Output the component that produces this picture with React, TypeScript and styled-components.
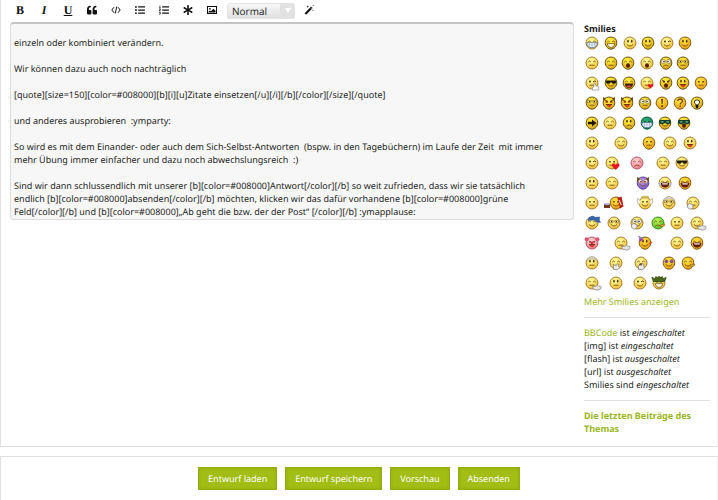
import React from "react";
import styled, { createGlobalStyle, css } from "styled-components";
import { FaQuoteLeft, FaListUl, FaListOl, FaAsterisk } from "react-icons/fa";

const GREEN = "#a2bd13";
const LINK = "#9bb71a";
const INK = "#1c1e22";
const LINE = "#e0e0e0";

const GlobalStyle = createGlobalStyle`
  * { box-sizing: border-box; }
  body {
    margin: 0;
    background: #fff;
    color: ${INK};
    font: 9px/13px "Noto Sans", "Open Sans", sans-serif;
    text-rendering: geometricPrecision;
  }
  button, select, textarea { font: inherit; color: inherit; margin: 0; text-rendering: inherit; }
`;

const Page = styled.main`
  display: flex;
  flex-direction: column;
  gap: 9px;
  min-height: 100vh;
`;

const Card = styled.section`
  border: 1px solid ${LINE};
  border-right-color: #f0f0f0;
  background: #fff;
`;

const EditorCard = styled(Card)`
  display: flex;
  gap: 10px;
  padding: 0 7px 11px 9px;
  border-top: 0;
`;

const Editor = styled.div`
  flex: 1;
  min-width: 0;
`;

const Toolbar = styled.div`
  display: flex;
  align-items: center;
  height: 22px;
  padding-bottom: 3px;
`;

const ToolButton = styled.button`
  display: flex;
  align-items: center;
  justify-content: center;
  width: 24px;
  height: 18px;
  padding: 0 4px 0 0;
  border: 0;
  background: none;
  color: #111;
  font-size: 10px;
`;

const Letter = styled.span<{ $italic?: boolean; $underline?: boolean }>`
  font: bold 12px/14px "Liberation Serif", serif;
  font-style: ${(p) => (p.$italic ? "italic" : "normal")};
  text-decoration: ${(p) => (p.$underline ? "underline" : "none")};
`;

const SizePicker = styled.label`
  display: grid;
  grid-template-columns: 1fr 15px;
  width: 68px;
  height: 16px;
  margin: 2px 4px 0 1px;
  border-radius: 3px;
  background: linear-gradient(#f8f8f8, #dedede);
  overflow: hidden;
`;

const SizeSelect = styled.select`
  grid-area: 1 / 1 / 2 / 3;
  padding: 0 4px;
  border: 1px solid #e4e4e4;
  border-radius: 3px;
  background: none;
  appearance: none;
  font-family: "Open Sans", sans-serif;
  font-size: 10px;
  line-height: 14px;
`;

const SizeArrow = styled.span`
  grid-area: 1 / 2 / 2 / 3;
  display: flex;
  align-items: center;
  justify-content: center;
  background: #e2e2e2;
  pointer-events: none;
`;

const Message = styled.textarea`
  display: block;
  width: 100%;
  height: 198px;
  padding: 12px 24px 0 3px;
  border: 1px solid #dcdcdc;
  border-top: 2px solid #c4c4c4;
  border-radius: 4px;
  background: #f7f7f7;
  resize: none;
  overflow: hidden;
`;

const Sidebar = styled.aside`
  width: 126px;
  padding-top: 22px;
`;

const SideTitle = styled.h2`
  margin: 0;
  font-size: 9px;
  font-weight: 700;
  line-height: 13px;
`;

const SmileyRow = styled.div`
  display: flex;
  height: 20px;
  margin-right: -7px;
`;

const SmileyButton = styled.button<{ $width: number }>`
  flex: 0 0 ${(p) => p.$width}px;
  display: flex;
  align-items: center;
  height: 16px;
  padding: 0;
  border: 0;
  background: none;
`;

const linkStyle = css`
  color: ${LINK};
  text-decoration: none;
`;

const TextLink = styled.a`
  ${linkStyle}
`;

const Rule = styled.hr`
  height: 1px;
  margin: 9px 0 8px;
  border: 0;
  background: ${LINE};
`;

const StatusList = styled.ul`
  margin: 0;
  padding: 0;
  list-style: none;
`;

const TopicLink = styled.a`
  ${linkStyle}
  display: block;
  padding-right: 12px;
  font-weight: 700;
`;

const ActionCard = styled(Card)`
  flex: 1;
  display: flex;
  justify-content: center;
  align-items: flex-start;
  gap: 8px;
  padding: 10px 0;
  border-bottom: 0;
`;

const ActionButton = styled.button`
  height: 23px;
  padding: 0 9px;
  border: 1px solid #93ae0d;
  background: ${GREEN};
  box-shadow: inset 0 0 3px #8aa40c;
  color: #fff;
`;

type Eyes = "dots" | "tall" | "closed" | "shades" | "wide" | "wink" | "angry" | "mask" | "glasses" | "purple" | "none";
type Mouth = "smile" | "flat" | "frown" | "grin" | "teeth" | "open" | "laugh" | "tongue" | "cry" | "none";
type Extra =
  | "hand" | "kiss" | "horns" | "bang" | "question" | "shock" | "arrow" | "heart" | "tears"
  | "mug" | "wings" | "cap" | "wave" | "hat" | "clown" | "palm" | "cowboy" | "side" | "hair" | "fist";
type Tone = "pale" | "gold" | "green" | "pink" | "violet" | "lime" | "amber";

interface Smiley {
  name: string;
  width: number;
  tone: Tone;
  eyes: Eyes;
  mouth: Mouth;
  extra?: Extra;
}

const tones: Record<Tone, [string, string, string]> = {
  pale: ["#fff48c", "#eebb2c", "#9c7226"],
  gold: ["#ffe83a", "#cf9a0c", "#5e4710"],
  amber: ["#ffdb3a", "#e2920c", "#75500f"],
  green: ["#25a875", "#087047", "#075638"],
  pink: ["#ffc3cc", "#ea7488", "#a8505e"],
  violet: ["#b191ed", "#7952c4", "#533591"],
  lime: ["#a8ea4c", "#54b91e", "#2d8418"],
};

const s = (
  name: string, width: number, tone: Tone, eyes: Eyes, mouth: Mouth, extra?: Extra,
): Smiley => ({ name, width, tone, eyes, mouth, extra });

const smilies: Smiley[][] = [
  [
    s("Zähne", 19, "pale", "closed", "teeth"), s("Grinsen", 19, "gold", "closed", "grin"),
    s("Lächeln", 18, "pale", "tall", "smile"), s("Froh", 19, "gold", "tall", "smile"),
    s("Zwinkern", 18, "pale", "wink", "smile"), s("Schief", 16, "amber", "tall", "smile"),
  ],
  [
    s("Traurig", 19, "pale", "closed", "flat"), s("Brille", 17, "gold", "closed", "flat"),
    s("Erstaunt", 19, "gold", "closed", "open"), s("Ruf", 19, "pale", "closed", "open"),
    s("Augen", 17, "gold", "wide", "frown"), s("Verwirrt", 16, "gold", "glasses", "flat"),
  ],
  [
    s("Denken", 19, "pale", "wink", "flat", "hand"), s("Cool", 18, "gold", "shades", "smile"),
    s("Lachen", 18, "gold", "closed", "laugh"), s("Kuss", 19, "pale", "closed", "flat", "kiss"),
    s("Böse", 17, "gold", "angry", "open"), s("Zunge", 18, "gold", "tall", "tongue"),
    s("Skeptisch", 16, "amber", "dots", "flat"),
  ],
  [
    s("Rot", 17, "gold", "glasses", "flat"), s("Teufel", 18, "gold", "angry", "tongue", "horns"),
    s("Teufelchen", 18, "gold", "angry", "tongue", "horns"), s("Augenrollen", 17, "gold", "wide", "flat"),
    s("Ausruf", 18, "amber", "none", "none", "bang"), s("Frage", 17, "amber", "none", "none", "question"),
    s("Idee", 16, "gold", "none", "none", "shock"),
  ],
  [
    s("Pfeil", 18, "gold", "none", "none", "arrow"), s("Neutral", 19, "pale", "closed", "flat"),
    s("Ernst", 18, "gold", "tall", "frown"), s("Grün", 18, "green", "dots", "teeth"),
    s("Maske", 19, "gold", "mask", "smile"), s("Streber", 16, "gold", "mask", "open"),
  ],
  [
    s("Nachdenklich", 29, "pale", "tall", "smile"), s("Zufrieden", 28, "pale", "closed", "smile"),
    s("Verlegen", 21, "amber", "dots", "flat"), s("Selig", 20, "pale", "closed", "smile"),
    s("Frech", 16, "pale", "tall", "tongue"),
  ],
  [
    s("Keck", 20, "pale", "wink", "smile"), s("Verliebt", 25, "pale", "dots", "flat", "heart"),
    s("Rosa", 26, "pink", "closed", "frown"), s("Grübeln", 19, "pale", "closed", "flat"),
    s("Sonnenbrille", 16, "pale", "shades", "smile"),
  ],
  [
    s("Zweifeln", 20, "pale", "tall", "flat"), s("Müde", 31, "pale", "closed", "flat"),
    s("Teufel lila", 22, "violet", "wide", "smile", "horns"), s("Weinen", 20, "pale", "closed", "cry", "tears"),
    s("Schreien", 16, "amber", "closed", "cry"),
  ],
  [
    s("Ruhig", 24, "pale", "dots", "flat"), s("Prost", 29, "amber", "dots", "smile", "mug"),
    s("Engel", 24, "pale", "dots", "smile", "wings"), s("Gelehrter", 24, "pale", "glasses", "smile", "hair"),
    s("Pst", 16, "pale", "closed", "flat", "fist"),
  ],
  [
    s("Schlafen", 22, "pale", "closed", "smile", "cap"), s("Lesen", 23, "pale", "glasses", "smile"),
    s("Horchen", 21, "pale", "wide", "smile", "fist"), s("Krank", 19, "lime", "closed", "frown", "side"),
    s("Pfeifen", 20, "pale", "dots", "flat"), s("Beten", 16, "pale", "closed", "smile", "wave"),
  ],
  [
    s("Clown", 29, "pink", "dots", "tongue", "clown"), s("Winken", 24, "pale", "closed", "flat", "wave"),
    s("Party", 32, "amber", "tall", "smile", "hat"), s("Friedlich", 20, "pale", "closed", "smile"),
    s("Lautes Lachen", 16, "amber", "closed", "cry"),
  ],
  [
    s("Hut", 24, "pale", "tall", "flat", "hair"), s("Applaus", 25, "pale", "closed", "smile", "palm"),
    s("Gähnen", 28, "pale", "closed", "open", "palm"), s("Hypnose", 19, "amber", "purple", "smile"),
    s("Lügen", 16, "amber", "closed", "smile", "side"),
  ],
  [
    s("Warten", 24, "pale", "closed", "flat", "wave"), s("Seufzen", 24, "pale", "tall", "flat"),
    s("Träumen", 19, "pale", "wink", "smile"), s("Cowboy", 16, "pale", "dots", "grin", "cowboy"),
  ],
];

const DARK = "#4c3510";

function EyeShape({ kind }: { kind: Eyes }) {
  switch (kind) {
    case "dots":
      return <path d="M5.2 6h1.5v1.5H5.2zM9.3 6h1.5v1.5H9.3z" fill={DARK} />;
    case "tall":
      return <><ellipse cx="6" cy="6.2" rx=".8" ry="1.4" fill={DARK} /><ellipse cx="9.7" cy="6.2" rx=".8" ry="1.4" fill={DARK} /></>;
    case "closed":
      return <path d="M4.2 7q1.2-1.7 2.7 0M9.1 7q1.2-1.7 2.7 0" fill="none" stroke="#7b5a20" strokeWidth=".9" />;
    case "wink":
      return <><circle cx="6" cy="6.5" r="1" fill={DARK} /><path d="M9 6.9q1.3-1.5 2.8-.4" fill="none" stroke={DARK} /></>;
    case "shades":
      return <path d="M2.8 5.6h10.4v1.6q-.8 1.9-3 1.6-1.6-.4-1.9-1.6h-.6Q7.2 8.8 5.4 8.8 3 8.8 2.8 6.9z" fill="#211b0c" />;
    case "wide":
      return <><circle cx="5.4" cy="6.5" r="2" fill="#fff" stroke="#735f37" strokeWidth=".6" /><circle cx="10.6" cy="6.5" r="2" fill="#fff" stroke="#735f37" strokeWidth=".6" /><circle cx="5.9" cy="6.5" r=".8" fill="#222" /><circle cx="10.1" cy="6.5" r=".8" fill="#222" /></>;
    case "angry":
      return <path d="M4 4.8l3 1.3v1.4H5.2zM12 4.8L9 6.1v1.4h1.8z" fill={DARK} />;
    case "mask":
      return <><path d="M2.3 5h11.4v3.4l-3.2 1L8 8l-2.5 1.4-3.2-1z" fill="#153e2b" /><path d="M4 6.3h2.6v1.3H4zM9.4 6.3H12v1.3H9.4z" fill="#60be8b" /></>;
    case "glasses":
      return <><path d="M3.5 5.4h3.4v2.4H3.5zM9.1 5.4h3.4v2.4H9.1zM6.9 6.2h2.2" fill="#f7dc72" stroke="#87692a" strokeWidth=".6" /><path d="M5 6h1v1.3H5zM10 6h1v1.3h-1z" fill={DARK} /></>;
    case "purple":
      return <><circle cx="5.4" cy="6.4" r="1.8" fill="#82518c" /><circle cx="10.6" cy="6.4" r="1.8" fill="#82518c" /></>;
    default:
      return null;
  }
}

function MouthShape({ kind }: { kind: Mouth }) {
  switch (kind) {
    case "smile":
      return <path d="M4.8 9.4q3.2 3.3 6.4 0" fill="none" stroke="#7a4b16" strokeWidth=".9" />;
    case "flat":
      return <path d="M5.5 10.2h5" stroke="#7a4b16" strokeWidth=".9" />;
    case "frown":
      return <path d="M5.2 11.3q2.8-2.8 5.6 0" fill="none" stroke="#7a4b16" strokeWidth=".9" />;
    case "grin":
      return <path d="M4.1 8.7h7.8q-.7 3.8-3.9 3.8T4.1 8.7z" fill="#fffbe2" stroke="#62450f" strokeWidth=".7" />;
    case "teeth":
      return <><path d="M3 7.7h10v2.5q-1.4 2.5-5 2.5T3 10.2z" fill="#fff" stroke="#4f74a0" strokeWidth=".8" /><path d="M3.2 10h9.6M5.3 8v4M8 8v4.4M10.7 8v4" stroke="#7897b3" strokeWidth=".5" /></>;
    case "open":
      return <ellipse cx="8" cy="10.5" rx="2" ry="2.2" fill="#5a1d10" />;
    case "laugh":
      return <><path d="M3.8 8.4h8.4q-.6 4.5-4.2 4.5T3.8 8.4z" fill="#4b2010" /><path d="M5.4 11.2q2.6-1.2 5.2 0-2.7 2.4-5.2 0z" fill="#d65244" /></>;
    case "tongue":
      return <><path d="M4.7 9h6.6q-.8 2.3-3.3 2.3T4.7 9z" fill="#783018" /><path d="M6.5 10h3.4v1.6q-1.6 1.6-3.4 0z" fill="#e13b27" /></>;
    case "cry":
      return <><path d="M3.6 8.1q4.4-1.6 8.8 0-.5 4.5-4.4 4.5T3.6 8.1z" fill="#621910" /><path d="M5.3 8.3h5.4v1.2H5.3z" fill="#fff" /></>;
    default:
      return null;
  }
}

function ExtraShape({ kind }: { kind?: Extra }) {
  switch (kind) {
    case "hand":
      return <path d="M8.6 15.2l-.4-2.6 1.6-.6.3-3.8 1.2-.2.5 2.8 2.8.8.3 3.2z" fill="#fff" stroke="#777" strokeWidth=".6" />;
    case "kiss":
      return <path d="M11.4 13.4L8.6 10.7q-.2-1.8 1.5-1.7 1 .1 1.4 1 .6-1.3 2-1 1.5.6.6 2.1z" fill="#e91820" />;
    case "heart":
      return <path d="M11.7 15L7.9 11q-.5-2.7 2-2.4 1.2 0 1.8 1.3.8-1.8 2.5-1.3 2 .7.9 2.8z" fill="#e91820" />;
    case "horns":
      return <><path d="M2.2 7L2 2l3 1.6M13.8 7l.2-5-3 1.6" fill="#6b4a14" /><path d="M4.6 7h2.2M9.2 7h2.2" stroke="#dc352c" strokeWidth="1.1" /></>;
    case "bang":
      return <path d="M7.2 4h1.7l-.4 5H7.6zM7.3 10.3h1.5V12H7.3z" fill="#4c2a00" />;
    case "question":
      return <path d="M5.8 6q.2-2 2.3-2 2.3 0 2.3 2 0 1-1.2 1.8-1 .5-1 1.7M8.2 10.5V12" fill="none" stroke="#704900" strokeWidth="1.3" />;
    case "shock":
      return <><path d="M8 4.8q-3.2 0-2.6 3.2L7 9.5V12h2V9.5L10.6 8q.6-3.2-2.6-3.2z" fill="#fff" stroke="#363226" /><path d="M7 9.6h2V13H7z" fill="#15130d" /></>;
    case "arrow":
      return <path d="M4 6.8h4V4.5L12.5 8 8 11.5V9.2H4z" fill="#221900" />;
    case "tears":
      return <path d="M2.7 7.5v4M13.3 7.5v4" stroke="#99c9de" strokeWidth="1.3" />;
    case "mug":
      return <><path d="M-4 9h6v4h-6z" fill="#74371f" /><path d="M-3.5 8h5v2h-5z" fill="#b9b4de" /><path d="M9.5 3l4-1.5 2 10-3.5 2z" fill="#b91e17" /><path d="M11 5l2.3 5" stroke="#fff" /></>;
    case "wings":
      return <><path d="M3 5.5L.4 3.4v4.4q.8 1.6 2.6 1.4M13 5.5l2.6-2.1v4.4q-.8 1.6-2.6 1.4" fill="#f7f5ea" stroke="#a5a396" strokeWidth=".7" /><ellipse cx="8" cy="2.2" rx="4" ry="1" fill="none" stroke="#d5b658" /></>;
    case "cap":
      return <path d="M4 5.5l1-3 3.4-1.4 3.1 1.2L15.7 2l-.5 3 1.4 2.4-4.2-.4-2-2z" fill="#3767ad" stroke="#284a80" strokeWidth=".5" />;
    case "wave":
      return <path d="M8.4 11.3l3 .2 1.8-1.3 1 .8 2.7.3v2.5l-3 1.4-4.2-1z" fill="#e4e4e4" stroke="#85847c" strokeWidth=".7" />;
    case "hat":
      return <><path d="M6.8 3.7L1.4.4 3 7z" fill="#b335b4" /><path d="M2 2.2l3.5 1.3" stroke="#54c0cf" /><path d="M12 9l3-2" stroke="#df5036" strokeWidth="1.5" /></>;
    case "clown":
      return <><circle cx="2.6" cy="4.2" r="2" fill="#df536d" /><circle cx="13.4" cy="4.2" r="2" fill="#df536d" /><circle cx="8" cy="8" r="1.4" fill="#dd2438" /></>;
    case "palm":
      return <path d="M5.7 14.5l-.5-3.7 2-1 1 .8 1.2-2 1.5.6-.3 2.1 1 1.4-2 2z" fill="#e9e9e5" stroke="#777" strokeWidth=".7" />;
    case "cowboy":
      return <path d="M.8 2.2l3 1.5 1-2.3L7 3l1-1.8L9 3l2.3-1.6 1 2.3 2.9-1.5-1.4 4.2q-5.8 1.2-11.6 0z" fill="#4a6718" stroke="#263d0a" strokeWidth=".6" />;
    case "side":
      return <path d="M10 10l4.8-1v1.5L11 12z" fill="#d4aa31" stroke="#81631c" strokeWidth=".5" />;
    case "hair":
      return <path d="M2.4 6Q3.5 1.5 8 1.7t5.7 4.6L10.8 4 6 4z" fill="#dedbcf" stroke="#96937f" strokeWidth=".5" />;
    case "fist":
      return <path d="M2.5 10l2-1.5 3.3 1.2.3 2.8-2.6 1.8-2.8-1.6z" fill="#ededed" stroke="#777" strokeWidth=".7" />;
    default:
      return null;
  }
}

const ROUND = "M8 2a6 6 0 1 1 0 12A6 6 0 0 1 8 2z";
const TAPERED = "M8 2C11.7 2 13.8 4.4 13.8 7.7 13.8 11.2 11 14.2 8 14.2S2.2 11.2 2.2 7.7C2.2 4.4 4.3 2 8 2z";
const taperedTones: Tone[] = ["gold", "amber", "green", "violet"];

function Face({ smiley }: { smiley: Smiley }) {
  const { tone, eyes, mouth, extra } = smiley;
  return (
    <svg width="16" height="16" viewBox="0 0 16 16" overflow="visible" aria-hidden="true">
      <path
        d={taperedTones.includes(tone) ? TAPERED : ROUND}
        fill={`url(#tone-${tone})`}
        stroke={tones[tone][2]}
        strokeWidth=".9"
      />
      <EyeShape kind={eyes} />
      <MouthShape kind={mouth} />
      <ExtraShape kind={extra} />
    </svg>
  );
}

function ToneDefs() {
  return (
    <svg width="0" height="0" display="block" aria-hidden="true">
      <defs>
        {(Object.keys(tones) as Tone[]).map((tone) => (
          <radialGradient key={tone} id={`tone-${tone}`} cx=".42" cy=".3" r=".75">
            <stop offset=".2" stopColor={tones[tone][0]} />
            <stop offset="1" stopColor={tones[tone][1]} />
          </radialGradient>
        ))}
      </defs>
    </svg>
  );
}

function CodeIcon() {
  return (
    <svg width="10" height="8" viewBox="0 0 10 8" fill="none" stroke="currentColor" aria-hidden="true">
      <path d="M3 1.2L.8 4 3 6.8M7 1.2L9.2 4 7 6.8M5.8.6L4.2 7.4" />
    </svg>
  );
}

function PictureIcon() {
  return (
    <svg width="10" height="8" viewBox="0 0 10 8" aria-hidden="true">
      <rect x=".5" y=".5" width="9" height="7" fill="none" stroke="currentColor" />
      <circle cx="2.9" cy="2.8" r=".9" fill="currentColor" />
      <path d="M1.5 6.5V5.6L3 4.4l1 .8 2.3-2.4 2.2 2v1.7z" fill="currentColor" />
    </svg>
  );
}

function WandIcon() {
  return (
    <svg width="10" height="10" viewBox="0 0 10 10" aria-hidden="true">
      <path d="M.6 8.2L7.2 1.6l1.5 1.5-6.6 6.6z" fill="currentColor" />
      <path d="M6.7 3.2l.6.6.5-.6-.5-.6z" fill="#fff" />
      <path d="M3.8.3l.3 1 1 .3-1 .3-.3 1-.3-1-1-.3 1-.3zM9.2 0l.2.6.6.2-.6.2-.2.6-.2-.6-.6-.2.6-.2zM9 4.4l.2.7.7.2-.7.2-.2.7-.2-.7-.7-.2.7-.2z" fill="currentColor" />
    </svg>
  );
}

const tools = [
  { label: "Fett", icon: <Letter>B</Letter> },
  { label: "Kursiv", icon: <Letter $italic>I</Letter> },
  { label: "Unterstrichen", icon: <Letter $underline>U</Letter> },
  { label: "Zitat", icon: <FaQuoteLeft /> },
  { label: "Code", icon: <CodeIcon /> },
  { label: "Liste", icon: <FaListUl /> },
  { label: "Nummerierte Liste", icon: <FaListOl /> },
  { label: "Listenelement", icon: <FaAsterisk /> },
  { label: "Bild", icon: <PictureIcon /> },
];

const message = `einzeln oder kombiniert verändern.

Wir können dazu auch noch nachträglich

[quote][size=150][color=#008000][b][i][u]Zitate einsetzen[/u][/i][/b][/color][/size][/quote]

und anderes ausprobieren  :ymparty:

So wird es mit dem Einander- oder auch dem Sich-Selbst-Antworten  (bspw. in den Tagebüchern) im Laufe der Zeit  mit immer mehr Übung immer einfacher und dazu noch abwechslungsreich  :)

Sind wir dann schlussendlich mit unserer [b][color=#008000]Antwort[/color][/b] so weit zufrieden, dass wir sie tatsächlich endlich [b][color=#008000]absenden[/color][/b] möchten, klicken wir das dafür vorhandene [b][color=#008000]grüne Feld[/color][/b] und [b][color=#008000]„Ab geht die bzw. der der Post“ [/color][/b] :ymapplause:`;

const actions = ["Entwurf laden", "Entwurf speichern", "Vorschau", "Absenden"];

export default function App() {
  return (
    <>
      <GlobalStyle />
      <Page>
        <EditorCard>
          <Editor>
            <Toolbar role="toolbar" aria-label="Formatierung">
              {tools.map(({ label, icon }) => (
                <ToolButton key={label} type="button" aria-label={label}>
                  {icon}
                </ToolButton>
              ))}
              <SizePicker>
                <SizeSelect aria-label="Schriftgröße" defaultValue="Normal">
                  <option>Normal</option>
                </SizeSelect>
                <SizeArrow>
                  <svg width="6" height="5" viewBox="0 0 6 5" aria-hidden="true">
                    <path d="M0 0h6L3 5z" fill="#fff" />
                  </svg>
                </SizeArrow>
              </SizePicker>
              <ToolButton type="button" aria-label="Schriftfarbe">
                <WandIcon />
              </ToolButton>
            </Toolbar>
            <Message aria-label="Nachricht" spellCheck={false} defaultValue={message} />
          </Editor>
          <Sidebar>
            <SideTitle>Smilies</SideTitle>
            <ToneDefs />
            {smilies.map((row) => (
              <SmileyRow key={row[0].name}>
                {row.map((smiley) => (
                  <SmileyButton
                    key={smiley.name}
                    type="button"
                    aria-label={smiley.name}
                    $width={smiley.width}
                  >
                    <Face smiley={smiley} />
                  </SmileyButton>
                ))}
              </SmileyRow>
            ))}
            <TextLink href="#smilies">Mehr Smilies anzeigen</TextLink>
            <Rule />
            <StatusList>
              <li><TextLink href="#bbcode">BBCode</TextLink> ist <em>eingeschaltet</em></li>
              <li>[img] ist <em>eingeschaltet</em></li>
              <li>[flash] ist <em>ausgeschaltet</em></li>
              <li>[url] ist <em>ausgeschaltet</em></li>
              <li>Smilies sind <em>eingeschaltet</em></li>
            </StatusList>
            <Rule />
            <TopicLink href="#beitraege">Die letzten Beiträge des Themas</TopicLink>
          </Sidebar>
        </EditorCard>
        <ActionCard>
          {actions.map((label) => (
            <ActionButton key={label} type="button">{label}</ActionButton>
          ))}
        </ActionCard>
      </Page>
    </>
  );
}
